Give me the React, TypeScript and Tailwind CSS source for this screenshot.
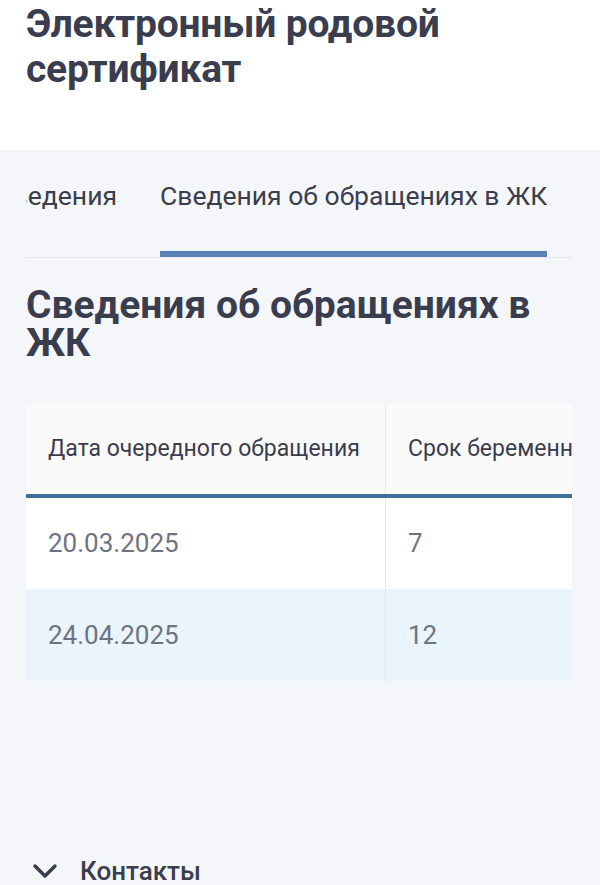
import React from "react";

export default function App() {
  const font = { fontFamily: "Roboto, 'Noto Sans', sans-serif" };
  return (
    <div className="w-[600px] h-[885px] overflow-hidden bg-[#f5f6f9] text-[#3a3d4e]" style={font}>
      <div className="bg-white h-[150px] px-[26px] pt-[2px]">
        <h1 className="text-[39px] leading-[45px] font-bold tracking-[-0.2px]">Электронный родовой сертификат</h1>
      </div>
      <div className="px-[26px]">
        <div className="mr-[2px] border-b border-[#e6e8ec] h-[108px] overflow-hidden flex gap-[43px] whitespace-nowrap">
          <div className="w-[91px] shrink-0 overflow-hidden flex justify-end">
            <div className="h-[107px] pt-[28px] text-[26.5px] leading-[36px] shrink-0">Сведения</div>
          </div>
          <div className="h-[107px] pt-[28px] text-[26.5px] leading-[36px] shrink-0 border-b-[6px] border-[#5a80b6]">Сведения об обращениях в ЖК</div>
        </div>
        <h2 className="mt-[28px] text-[39px] leading-[38px] font-bold pr-[20px]">Сведения об обращениях в ЖК</h2>
        <div className="mt-[42px] mr-[2px] overflow-hidden">
          <div className="flex h-[90px] bg-[#fafafb] border-b-[4px] border-[#3f6e99] box-content">
            <div className="w-[360px] shrink-0 border-r border-[#e9eaec] flex items-center pl-[22px] text-[23px] whitespace-nowrap">Дата очередного обращения</div>
            <div className="flex items-center pl-[22px] text-[23px] whitespace-nowrap">Срок беременности</div>
          </div>
          <div className="flex h-[91px] bg-white text-[#6e7380]">
            <div className="w-[360px] shrink-0 border-r border-[#e9eaec] flex items-center pl-[22px] text-[26px]">20.03.2025</div>
            <div className="flex items-center pl-[22px] text-[26px]">7</div>
          </div>
          <div className="flex h-[92px] bg-[#eaf4fd] text-[#6e7380]">
            <div className="w-[360px] shrink-0 border-r border-[#dfe6ee] flex items-center pl-[22px] text-[26px]">24.04.2025</div>
            <div className="flex items-center pl-[22px] text-[26px]">12</div>
          </div>
        </div>
        <div className="mt-[175px] flex items-center gap-[22px] pl-[6px] h-[30px]">
          <svg width="26" height="16" viewBox="0 0 26 16" fill="none" stroke="#3a3d4e" strokeWidth="3.5" strokeLinecap="round" strokeLinejoin="round">
            <path d="M3 3l10 10L23 3" />
          </svg>
          <span className="text-[26px] leading-[30px] font-medium">Контакты</span>
        </div>
      </div>
    </div>
  );
}
